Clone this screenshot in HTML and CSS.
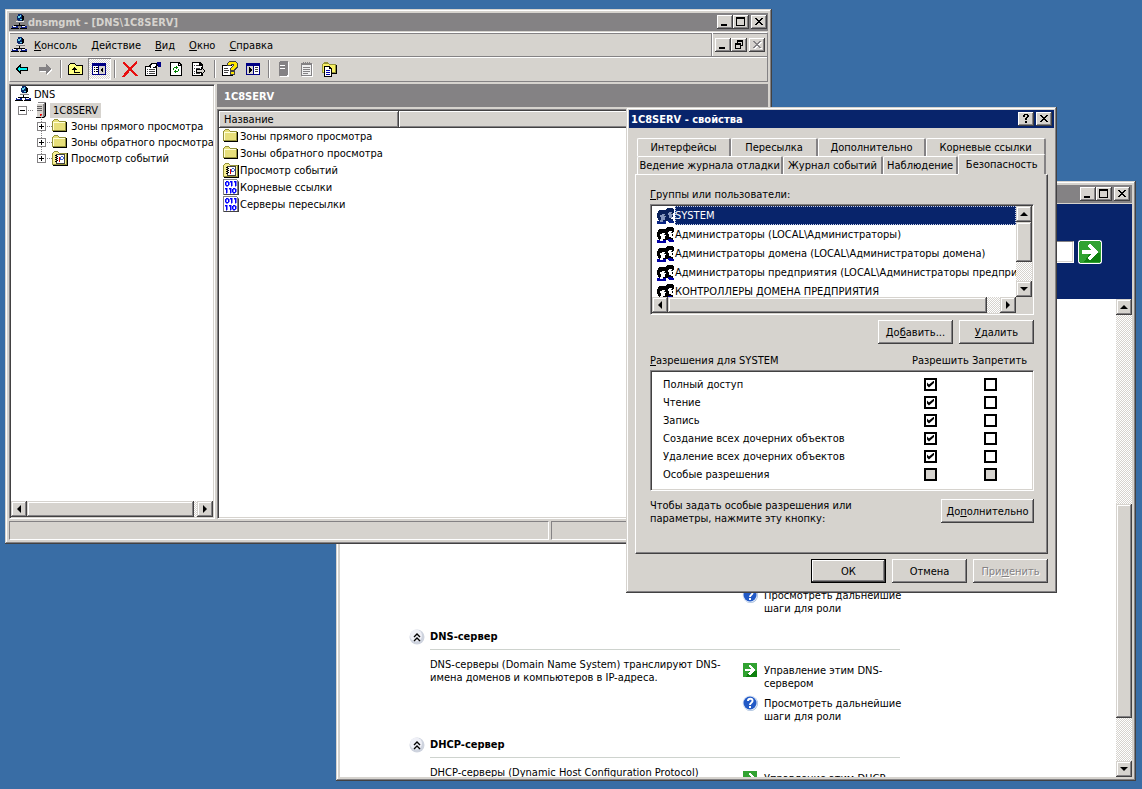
FILE: index.html
```html
<!DOCTYPE html>
<html lang="ru">
<head>
	<meta charset="UTF-8">
	<title>dnsmgmt</title>
	<link rel="stylesheet" href="styles.css">
</head>
<body>
	<svg class="sprite" aria-hidden="true">
		<symbol id="i-dns" viewBox="0 0 16 16">
			<path d="M7 0h4v1h1v1h1v4h-1v1H7V6H6V2h1z" fill="#08286b"/>
			<path d="M7 2h2V1h1v2H9v1H7zM9 5h2v1H9z" fill="#63cfe7"/>
			<path d="M11 1h1v1h1v4h-1v1h-1z" fill="#000"/>
			<path d="M5 7h8v2H5z" fill="#e7e7e7"/>
			<path d="M5 8h9v1H5z" fill="#848284"/>
			<path d="M8 9h1v2h5v2h-1v-1H4v1H3v-2h5z" fill="#000"/>
			<path d="M1 12h6v2H1zM10 12h6v2h-6z" fill="#10208c"/>
			<path d="M2 12h3v1H2zM11 12h3v1h-3z" fill="#fff"/>
			<path d="M0 14h8v1H0zM9 14h7v1H9z" fill="#000"/>
		</symbol>
		<symbol id="i-server" viewBox="0 0 16 16">
			<path d="M3 2l2-2h8v14l-2 2H3z" fill="#848284"/>
			<path d="M3 2h7v13H3z" fill="#d6d3ce"/>
			<path d="M4 1h7v1H4zM3 2h1v13H3z" fill="#fff"/>
			<path d="M4 4h5v1H4zM4 6h5v1H4zM4 8h5v1H4z" fill="#636163"/>
			<path d="M12 1h1v13h-1v1h-1v1H3v-1h8v-1h1z" fill="#000"/>
			<path d="M7 12h2v2H7z" fill="#f00"/>
		</symbol>
		<symbol id="i-folder" viewBox="0 0 16 16">
			<path d="M0 3h1V2h1V1h4v1h1v1h7v10H0z" fill="#94923a"/>
			<path d="M1 4V3h1V2h4v1h1v1h6v8H1z" fill="#e7df7b"/>
			<path d="M1 4h12v1H2v7H1z" fill="#ffffd6"/>
			<path d="M14 4h1v10H1v-1h13z" fill="#000"/>
		</symbol>
		<symbol id="i-events" viewBox="0 0 16 16">
			<path d="M0 3h1V2h1V1h4v1h1v1h8v12H0z" fill="#94923a"/>
			<path d="M1 4V3h1V2h4v1h1v1h7v10H1z" fill="#f7ef94"/>
			<path d="M15 3h1v13H1v-1h14z" fill="#000"/>
			<path d="M4 4h9v10H4z" fill="#424142"/>
			<path d="M5 5h7v8H5z" fill="#fff"/>
			<path d="M3 5h2v1H3zM3 7h2v1H3zM3 9h2v1H3zM3 11h2v1H3zM5 6h1v1H5zM5 8h1v1H5zM5 10h1v1H5z" fill="#000"/>
			<path d="M7 7h1v5H7z" fill="#d00"/>
			<path d="M9 6h2v1H9zM8 7h1v3H8zM11 7h1v2h-1zM9 9h2v1H9z" fill="#4264ce"/>
		</symbol>
		<symbol id="i-binary" viewBox="0 0 16 16">
			<path d="M0 0h14v1h1v1h1v14H0z" fill="#848284"/>
			<path d="M1 1h13v14H1z" fill="#fff"/>
			<path d="M15 3h1v13H1v-1h14z" fill="#424142"/>
			<path d="M3 2h2v1h1v3H5v1H3V6H2V3h1zM3 3v3h2V3zM7 2h2v5H8V3H7zM11 2h2v5h-1V3h-1zM2 9h2v5H3v-4H2zM6 9h2v5H7v-4H6zM10 9h2v1h1v3h-1v1h-2v-1H9v-3h1zM10 10v3h2v-3z" fill="#00f" stroke="#00f" stroke-width=".5" fill-rule="evenodd"/>
		</symbol>
		<symbol id="i-back" viewBox="0 0 16 16">
			<path d="M1 8l5-5h1v3h7v4H7v3H6z" fill="#000"/>
			<path d="M3 8l3-3v2h7v2H6v2z" fill="#00efef"/>
		</symbol>
		<symbol id="i-forward" viewBox="0 0 16 16">
			<path d="M15 9l-5-5v3H3v4h7v3z" fill="#fff"/>
			<path d="M14 8L9 3v3H2v4h7v3z" fill="#848284"/>
		</symbol>
		<symbol id="i-up" viewBox="0 0 16 16">
			<path d="M0 4h1V3h1V2h5v1h1v1h7v10H0z" fill="#000"/>
			<path d="M1 5V4h1V3h5v1h1v1h6v8H1z" fill="#ffff84"/>
			<path d="M6 6h1v1h1v1h1v1H7v2h5v1H6V9H4V8h1V7h1z" fill="#000"/>
		</symbol>
		<symbol id="i-tree" viewBox="0 0 16 16">
			<path d="M1 2h14v12H1z" fill="#000084"/>
			<path d="M2 5h5v8H2z" fill="#fff"/>
			<path d="M8 5h6v8H8z" fill="#d6d3ce"/>
			<path d="M3 6h1v1H3zM5 6h2v1H5zM3 8h1v1H3zM5 8h2v1H5zM3 10h1v1H3zM5 10h2v1H5z" fill="#000"/>
			<path d="M12 6v6L9 9z" fill="#000"/>
		</symbol>
		<symbol id="i-pane" viewBox="0 0 16 16">
			<path d="M1 2h14v12H1z" fill="#000084"/>
			<path d="M2 5h6v8H2z" fill="#d6d3ce"/>
			<path d="M9 5h5v8H9z" fill="#fff"/>
			<path d="M10 6h3v1h-3zM10 8h3v1h-3zM10 10h3v1h-3z" fill="#424142"/>
			<path d="M4 6v6l3-3z" fill="#000"/>
		</symbol>
		<symbol id="i-delete" viewBox="0 0 16 16">
			<path d="M2 1l6 6 6-6v2L9 8l6 6h-2L8 9l-5 6H1l6-7-6-6z" fill="#e71010" stroke="#e71010"/>
		</symbol>
		<symbol id="i-props" viewBox="0 0 16 16">
			<path d="M0 5h12v10H0z" fill="#000"/>
			<path d="M1 6h10v8H1z" fill="#fff"/>
			<path d="M2 8h1v1H2zM4 8h6v1H4zM2 10h1v1H2zM4 10h6v1H4zM2 12h1v1H2zM4 12h6v1H4z" fill="#424142"/>
			<path d="M3 5l3-3h5l2 2-3 3H8L7 6 5 7z" fill="#000"/>
			<path d="M5 5l2-2h4v2L9 6H7z" fill="#fff"/>
			<path d="M12 1h4v5h-3z" fill="#000084"/>
		</symbol>
		<symbol id="i-refresh" viewBox="0 0 16 16">
			<path d="M2 1h9l3 3v11H2z" fill="#000"/>
			<path d="M3 2h7v3h3v9H3z" fill="#fff"/>
			<path d="M11 3v1h1z" fill="#fff"/>
			<path d="M6 6h2V5h1v1h1v1H9v1H8V7H6v2H5V7h1zM10 8h1v2h-1v1H8v1H7v-1H6v-1h1V9h1v1h2z" fill="#008200"/>
		</symbol>
		<symbol id="i-export" viewBox="0 0 16 16">
			<path d="M1 1h8l3 3v11H1z" fill="#000"/>
			<path d="M2 2h6v3h3v9H2z" fill="#fff"/>
			<path d="M3 4h1v1H3zM5 4h3v1H5zM3 7h1v1H3zM5 7h4v1H5zM3 10h1v1H3zM3 12h1v1H3zM5 12h4v1H5z" fill="#424142"/>
			<path d="M5 8h5V6l5 4-5 4v-2H5z" fill="#000"/>
			<path d="M6 9h5V8l3 2-3 2v-1H6z" fill="#d6d3ce"/>
		</symbol>
		<symbol id="i-help" viewBox="0 0 16 16">
			<path d="M0 4h10l1 11H0z" fill="#000"/>
			<path d="M1 5h9v9H1z" fill="#fff"/>
			<path d="M2 7h4v1H2zM2 9h5v1H2zM2 11h4v1H2z" fill="#424142"/>
			<path d="M5 5V2l3-2h5l3 3v3l-3 3v5H8V7l3-2V4h-2v1z" fill="#424142"/>
			<path d="M6 4V2l2-1h5l2 2v3l-3 2v1H9V7l3-2V3H9v1zM9 11h3v2H9z" fill="#ffe700"/>
		</symbol>
		<symbol id="i-srv-off" viewBox="0 0 16 16">
			<path d="M4 1h9v15H4z" fill="#fff"/>
			<path d="M3 1h1V0h8v14h-1v1H3z" fill="#848284"/>
			<path d="M4 4h5v1H4zM4 7h5v1H4z" fill="#fff"/>
		</symbol>
		<symbol id="i-note-off" viewBox="0 0 16 16">
			<path d="M3 3h11v13H3z" fill="#fff"/>
			<path d="M2 2h11v13H2z" fill="#848284"/>
			<path d="M3 4h9v10H3z" fill="#efefef"/>
			<path d="M4 1h1v3H4zM6 1h1v3H6zM8 1h1v3H8zM10 1h1v3h-1zM4 6h7v1H4zM4 8h7v1H4zM4 10h7v1H4zM4 12h5v1H4z" fill="#848284"/>
		</symbol>
		<symbol id="i-folder-doc" viewBox="0 0 16 16">
			<path d="M0 3h1V2h1V1h4v1h1v1h7v9H0z" fill="#94923a"/>
			<path d="M1 3h6v1h6v7H1z" fill="#f7ef63"/>
			<path d="M14 4h1v9H9v-1h5zM2 5h6v1h1v1h1v9H2z" fill="#000"/>
			<path d="M3 6h4v2h2v7H3z" fill="#fff"/>
			<path d="M4 9h4v1H4zM4 11h4v1H4zM4 13h4v1H4z" fill="#0000a5"/>
		</symbol>
		<symbol id="i-users" viewBox="0 0 17 16">
			<path d="M8 3h1V1h1V0h6v1h1v4h-1v4h-2v2h2v2H8z" fill="var(--hair, #000)"/>
			<path d="M12 4h3v2h1v1h-1v3h-3V7h-1V5h1z" fill="var(--skin, #fff)"/>
			<path d="M0 5h1V3h1V2h7v1h1v3h-1v7H2v-1H1v-2H0z" fill="var(--hair, #000)"/>
			<path d="M5 6h3v2h1v1H8v3H6v2H3v-2h1V9H3V7h2z" fill="var(--skin, #fff)"/>
			<path d="M7 7h1v1H7zM14 5h1v1h-1z" fill="#31414a"/>
			<path d="M0 13h3v1h3v-1h3v3H0zM11 12h4v1h2v2h-5v-1h-1z" fill="var(--shirt, #0000a5)"/>
		</symbol>
		<symbol id="i-go" viewBox="0 0 24 24">
			<path d="M2 1h20v1h1v20h-1v1H2v-1H1V2h1z" fill="#31a231"/>
			<path d="M12 13h10v9H6z" fill="#108210"/>
			<path d="M4 10h9L9 6l3-2 8 8-8 8-3-2 4-4H4z" fill="#fff"/>
		</symbol>
		<symbol id="i-ask" viewBox="0 0 16 16">
			<circle cx="8.500" cy="8.500" r="7.500" fill="#9cb6d6"/>
			<circle cx="8" cy="8" r="7.500" fill="#dee7f7"/>
			<circle cx="8" cy="8" r="6.500" fill="#2159c6"/>
			<path d="M6 6c0-3 5-3 4.500 0C10.500 8 8 7.500 8 10M8 11v2" fill="none" stroke="#fff" stroke-width="2"/>
		</symbol>
		<symbol id="i-chevrons" viewBox="0 0 16 16">
			<circle cx="8" cy="8" r="7.500" fill="#ced3de"/>
			<circle cx="7" cy="6.500" r="6" fill="#eff0f7"/>
			<path d="M5 8l3-3 3 3M5 12l3-3 3 3" fill="none" stroke="#000" stroke-width="1.400"/>
		</symbol>
		<symbol id="i-min" viewBox="0 0 12 10"><path d="M2 7h6v2H2z"/></symbol>
		<symbol id="i-max" viewBox="0 0 12 10"><path d="M1 0h9v9H1zM2 2v6h7V2z" fill-rule="evenodd"/></symbol>
		<symbol id="i-restore" viewBox="0 0 12 10"><path d="M4 0h6v6H8v3H2V3h2zM5 2v1h3v2h1V2zM3 5v3h4V5z" fill-rule="evenodd"/></symbol>
		<symbol id="i-close" viewBox="0 0 12 10"><path d="M2 1h2v1h1v1h2V2h1V1h2v1H9v1H8v1H7v1h1v1h1v1h1v1H8V7H7V6H5v1H4v1H2V7h1V6h1V5h1V4H4V3H3V2H2z"/></symbol>
		<symbol id="i-what" viewBox="0 0 12 10"><path d="M3 3V1h1V0h4v1h1v2H8v1H7v2H5V4h1V3h1V1H5v2zM5 7h2v2H5z"/></symbol>
	</svg>

	<!-- manage server -->
	<section class="window manage">
		<header class="titlebar">
			<span class="title"></span>
			<button class="cap" aria-label="Свернуть"><svg><use href="#i-min"/></svg></button>
			<button class="cap" aria-label="Развернуть"><svg><use href="#i-max"/></svg></button>
			<button class="cap close" aria-label="Закрыть"><svg><use href="#i-close"/></svg></button>
		</header>
		<div class="banner">
			<input type="text" class="search" aria-label="Поиск">
			<button class="go" aria-label="Найти"><svg><use href="#i-go"/></svg></button>
		</div>
		<div class="scroller">
			<div class="roles">
				<div class="role first">
					<ul class="links">
						<li><a href="#"><svg class="icon smooth"><use href="#i-ask"/></svg><span>Просмотреть дальнейшие<br>шаги для роли</span></a></li>
					</ul>
				</div>
				<div class="role">
					<svg class="icon smooth"><use href="#i-chevrons"/></svg>
					<h2>DNS-сервер</h2>
					<div class="role-body">
						<p>DNS-серверы (Domain Name System) транслируют DNS-<br>имена доменов и компьютеров в IP-адреса.</p>
						<ul class="links">
							<li><a href="#"><svg class="icon"><use href="#i-go"/></svg><span>Управление этим DNS-<br>сервером</span></a></li>
							<li><a href="#"><svg class="icon smooth"><use href="#i-ask"/></svg><span>Просмотреть дальнейшие<br>шаги для роли</span></a></li>
						</ul>
					</div>
				</div>
				<div class="role">
					<svg class="icon smooth"><use href="#i-chevrons"/></svg>
					<h2>DHCP-сервер</h2>
					<div class="role-body">
						<p>DHCP-серверы (Dynamic Host Configuration Protocol)</p>
						<ul class="links">
							<li><a href="#"><svg class="icon"><use href="#i-go"/></svg><span>Управление этим DHCP-</span></a></li>
						</ul>
					</div>
				</div>
			</div>
			<div class="scrollbar vertical page-scroll">
				<button class="up" aria-label="Вверх"></button>
				<div class="track"><div class="thumb"></div></div>
				<button class="down" aria-label="Вниз"></button>
			</div>
		</div>
	</section>

	<!-- dns console -->
	<section class="window console">
		<header class="titlebar">
			<svg class="icon"><use href="#i-dns"/></svg>
			<h1 class="title">dnsmgmt - [DNS\1C8SERV]</h1>
			<button class="cap" aria-label="Свернуть"><svg><use href="#i-min"/></svg></button>
			<button class="cap" aria-label="Развернуть"><svg><use href="#i-max"/></svg></button>
			<button class="cap close" aria-label="Закрыть"><svg><use href="#i-close"/></svg></button>
		</header>
		<div class="bars">
			<nav class="menubar">
				<svg class="icon"><use href="#i-dns"/></svg>
				<button><u>К</u>онсоль</button>
				<button><u>Д</u>ействие</button>
				<button><u>В</u>ид</button>
				<button><u>О</u>кно</button>
				<button><u>С</u>правка</button>
				<div class="mdi">
					<button class="cap" aria-label="Свернуть окно"><svg><use href="#i-min"/></svg></button>
					<button class="cap" aria-label="Восстановить окно"><svg><use href="#i-restore"/></svg></button>
					<button class="cap close" disabled aria-label="Закрыть окно"><svg><use href="#i-close"/></svg></button>
				</div>
			</nav>
			<div class="toolbar">
				<button aria-label="Назад"><svg class="icon"><use href="#i-back"/></svg></button>
				<button aria-label="Вперед" disabled><svg class="icon"><use href="#i-forward"/></svg></button>
				<i class="sep"></i>
				<button aria-label="На уровень выше"><svg class="icon"><use href="#i-up"/></svg></button>
				<button class="pressed" aria-label="Дерево консоли"><svg class="icon"><use href="#i-tree"/></svg></button>
				<i class="sep"></i>
				<button aria-label="Удалить"><svg class="icon"><use href="#i-delete"/></svg></button>
				<button aria-label="Свойства"><svg class="icon"><use href="#i-props"/></svg></button>
				<button aria-label="Обновить"><svg class="icon"><use href="#i-refresh"/></svg></button>
				<button aria-label="Экспорт"><svg class="icon"><use href="#i-export"/></svg></button>
				<i class="sep"></i>
				<button aria-label="Справка"><svg class="icon"><use href="#i-help"/></svg></button>
				<button aria-label="Область действий"><svg class="icon"><use href="#i-pane"/></svg></button>
				<i class="sep"></i>
				<button aria-label="Сервер" disabled><svg class="icon"><use href="#i-srv-off"/></svg></button>
				<button aria-label="Запись" disabled><svg class="icon"><use href="#i-note-off"/></svg></button>
				<button aria-label="Новая зона"><svg class="icon"><use href="#i-folder-doc"/></svg></button>
			</div>
		</div>
		<div class="panes">
			<div class="tree-pane sunken">
				<ul class="tree">
					<li class="lvl0"><svg class="icon"><use href="#i-dns"/></svg><span>DNS</span></li>
					<li class="lvl1"><button class="toggle minus" aria-label="Свернуть"></button><svg class="icon"><use href="#i-server"/></svg><span class="current">1C8SERV</span></li>
					<li class="lvl2"><button class="toggle" aria-label="Развернуть"></button><svg class="icon"><use href="#i-folder"/></svg><span>Зоны прямого просмотра</span></li>
					<li class="lvl2"><button class="toggle" aria-label="Развернуть"></button><svg class="icon"><use href="#i-folder"/></svg><span>Зоны обратного просмотра</span></li>
					<li class="lvl2"><button class="toggle" aria-label="Развернуть"></button><svg class="icon"><use href="#i-events"/></svg><span>Просмотр событий</span></li>
				</ul>
				<div class="scrollbar horizontal tree-scroll">
					<button class="left" aria-label="Влево"></button>
					<div class="track"><div class="thumb"></div></div>
					<button class="right" aria-label="Вправо"></button>
				</div>
			</div>
			<div class="detail">
				<h2 class="detail-head">1C8SERV</h2>
				<div class="detail-list sunken">
					<table>
						<thead>
							<tr><th class="col-name">Название</th><th></th></tr>
						</thead>
						<tbody>
							<tr><td colspan="2"><svg class="icon"><use href="#i-folder"/></svg>Зоны прямого просмотра</td></tr>
							<tr><td colspan="2"><svg class="icon"><use href="#i-folder"/></svg>Зоны обратного просмотра</td></tr>
							<tr><td colspan="2"><svg class="icon"><use href="#i-events"/></svg>Просмотр событий</td></tr>
							<tr><td colspan="2"><svg class="icon"><use href="#i-binary"/></svg>Корневые ссылки</td></tr>
							<tr><td colspan="2"><svg class="icon"><use href="#i-binary"/></svg>Серверы пересылки</td></tr>
						</tbody>
					</table>
				</div>
			</div>
		</div>
		<footer class="status"><div class="main"></div><div></div></footer>
	</section>

	<!-- server properties -->
	<section class="window dialog">
		<header class="titlebar active">
			<h1 class="title">1C8SERV - свойства</h1>
			<button class="cap" aria-label="Справка"><svg><use href="#i-what"/></svg></button>
			<button class="cap close" aria-label="Закрыть"><svg><use href="#i-close"/></svg></button>
		</header>
		<div class="dialog-body">
			<div class="tabs back">
				<button class="t1">Интерфейсы</button>
				<button class="t2">Пересылка</button>
				<button class="t3">Дополнительно</button>
				<button class="t4">Корневые ссылки</button>
			</div>
			<div class="tabs front">
				<button class="t5">Ведение журнала отладки</button>
				<button class="t6">Журнал событий</button>
				<button class="t7">Наблюдение</button>
				<button class="t8 selected">Безопасность</button>
			</div>
			<div class="page">
				<div class="caption" id="groups"><u>Г</u>руппы или пользователи:</div>
				<div class="groups sunken">
					<ul role="listbox" aria-labelledby="groups">
						<li class="selected"><svg class="icon"><use href="#i-users"/></svg><span>SYSTEM</span></li>
						<li><svg class="icon"><use href="#i-users"/></svg><span>Администраторы (LOCAL\Администраторы)</span></li>
						<li><svg class="icon"><use href="#i-users"/></svg><span>Администраторы домена (LOCAL\Администраторы домена)</span></li>
						<li><svg class="icon"><use href="#i-users"/></svg><span>Администраторы предприятия (LOCAL\Администраторы предприятия)</span></li>
						<li><svg class="icon"><use href="#i-users"/></svg><span>КОНТРОЛЛЕРЫ ДОМЕНА ПРЕДПРИЯТИЯ</span></li>
					</ul>
					<div class="scrollbar vertical">
						<button class="up" aria-label="Вверх"></button>
						<div class="track"><div class="thumb"></div></div>
						<button class="down" aria-label="Вниз"></button>
					</div>
					<div class="scrollbar horizontal">
						<button class="left" aria-label="Влево"></button>
						<div class="track"><div class="thumb"></div></div>
						<button class="right" aria-label="Вправо"></button>
					</div>
				</div>
				<div class="actions">
					<button class="btn">До<u>б</u>авить...</button>
					<button class="btn"><u>У</u>далить</button>
				</div>
				<div class="caption perm-head">
					<span id="perms"><u>Р</u>азрешения для SYSTEM</span>
					<span class="allow">Разрешить</span>
					<span class="deny">Запретить</span>
				</div>
				<div class="perms sunken">
					<table aria-labelledby="perms">
						<tr><td>Полный доступ</td><td><input type="checkbox" checked aria-label="Полный доступ: разрешить"></td><td><input type="checkbox" aria-label="Полный доступ: запретить"></td></tr>
						<tr><td>Чтение</td><td><input type="checkbox" checked aria-label="Чтение: разрешить"></td><td><input type="checkbox" aria-label="Чтение: запретить"></td></tr>
						<tr><td>Запись</td><td><input type="checkbox" checked aria-label="Запись: разрешить"></td><td><input type="checkbox" aria-label="Запись: запретить"></td></tr>
						<tr><td>Создание всех дочерних объектов</td><td><input type="checkbox" checked aria-label="Создание: разрешить"></td><td><input type="checkbox" aria-label="Создание: запретить"></td></tr>
						<tr><td>Удаление всех дочерних объектов</td><td><input type="checkbox" checked aria-label="Удаление: разрешить"></td><td><input type="checkbox" aria-label="Удаление: запретить"></td></tr>
						<tr><td>Особые разрешения</td><td><input type="checkbox" disabled aria-label="Особые: разрешить"></td><td><input type="checkbox" disabled aria-label="Особые: запретить"></td></tr>
					</table>
				</div>
				<div class="more">
					<p>Чтобы задать особые разрешения или<br>параметры, нажмите эту кнопку:</p>
					<button class="btn wide">До<u>п</u>олнительно</button>
				</div>
			</div>
			<div class="buttons">
				<button class="btn default">ОК</button>
				<button class="btn">Отмена</button>
				<button class="btn" disabled>При<u>м</u>енить</button>
			</div>
		</div>
	</section>
</body>
</html>
```
FILE: styles.css
```css
* {
	box-sizing: border-box;
	margin: 0;
	padding: 0;
}
:root {
	--face: #d6d3ce;
	--shade: #848284;
	--dark: #424142;
	--navy: #08246b;
	--raised: inset -1px -1px var(--dark), inset 1px 1px #fff, inset -2px -2px var(--shade);
}
body {
	height: 100vh;
	position: relative;
	overflow: hidden;
	background: #396da5;
	color: #000;
	font: 11px/13px "DejaVu Sans Condensed", Tahoma, sans-serif;
}
button, input {
	font: inherit;
	color: inherit;
	border: 0;
	border-radius: 0;
	background: none;
}
ul {
	list-style: none;
}
a {
	color: inherit;
	text-decoration: none;
}
h1, h2 {
	font-size: 11px;
	font-weight: bold;
}
svg {
	display: block;
	shape-rendering: crispEdges;
}
.smooth {
	shape-rendering: auto;
}
.sprite {
	position: absolute;
	width: 0;
	height: 0;
}
.icon {
	width: 16px;
	height: 16px;
	flex: none;
}
.sunken {
	border: 1px solid;
	border-color: var(--shade) #fff #fff var(--shade);
	background: #fff;
	position: relative;
	padding: 1px;
	box-shadow: inset 1px 1px var(--dark), inset -1px -1px var(--face);
}

/* windows */
.window {
	position: absolute;
	display: flex;
	flex-direction: column;
	padding: 4px;
	background: var(--face);
	box-shadow: inset -1px -1px var(--dark), inset 1px 1px var(--face), inset -2px -2px var(--shade), inset 2px 2px #fff;
}
.manage {
	left: 336px;
	top: 181px;
	width: 800px;
	height: 600px;
}
.console {
	left: 5px;
	top: 9px;
	width: 767px;
	height: 535px;
}
.dialog {
	left: 626px;
	top: 107px;
	width: 431px;
	padding: 3px;
}
.titlebar {
	display: flex;
	align-items: center;
	flex: none;
	height: 18px;
	padding: 0 2px;
	background: var(--shade);
	color: var(--face);
}
.console .titlebar {
	padding-right: 1px;
}
.titlebar.active {
	background: var(--navy);
	color: #fff;
}
.title {
	flex: 1;
	white-space: nowrap;
}
.titlebar .icon {
	margin-right: 1px;
}
.cap {
	width: 16px;
	height: 14px;
	padding: 2px;
	background: var(--face);
	box-shadow: var(--raised);
	color: #000;
}
.cap svg {
	width: 12px;
	height: 10px;
}
.cap.close {
	margin-left: 2px;
}
.cap:disabled svg {
	fill: var(--shade);
	filter: drop-shadow(1px 1px #fff);
}

/* scrollbars */
.scrollbar {
	display: flex;
	background: conic-gradient(#fff 25%, var(--face) 0 50%, #fff 0 75%, var(--face) 0) 0 0/2px 2px;
}
.scrollbar.vertical {
	width: 16px;
	flex-direction: column;
}
.scrollbar.horizontal {
	height: 16px;
}
.scrollbar button {
	display: flex;
	align-items: center;
	justify-content: center;
	width: 16px;
	height: 16px;
	flex: none;
}
.scrollbar button, .thumb {
	background: var(--face);
	box-shadow: inset -1px -1px var(--dark), inset 1px 1px var(--face), inset -2px -2px var(--shade), inset 2px 2px #fff;
}
.scrollbar button::before {
	content: "";
	border: 4px solid transparent;
}
.scrollbar .up::before {
	border-top: 0;
	border-bottom-color: #000;
}
.scrollbar .down::before {
	border-bottom: 0;
	border-top-color: #000;
}
.scrollbar .left::before {
	border-left: 0;
	border-right-color: #000;
}
.scrollbar .right::before {
	border-right: 0;
	border-left-color: #000;
}
.track {
	flex: 1;
	display: flex;
	flex-direction: inherit;
}
.horizontal .thumb {
	width: 96%;
}
.vertical .thumb {
	height: 68%;
}
.tree-scroll .thumb {
	width: 98%;
}
.page-scroll .track {
	justify-content: flex-end;
	padding-bottom: 43px;
}
.page-scroll .thumb {
	height: 53%;
}

/* manage server */
.banner {
	display: flex;
	align-items: center;
	justify-content: flex-end;
	gap: 4px;
	flex: none;
	height: 95px;
	margin-top: 1px;
	padding-right: 30px;
	background: var(--navy);
}
.search {
	width: 180px;
	height: 22px;
	padding: 0 4px;
	background: #fff;
	border: 1px solid;
	border-color: var(--shade) #fff #fff var(--shade);
	box-shadow: inset -1px -1px var(--face);
}
.go, .go svg {
	width: 24px;
	height: 24px;
}
.go {
	border-radius: 3px;
	background: #fff;
}
.scroller {
	display: flex;
	flex: 1;
	min-height: 0;
	background: #fff;
}
.roles {
	flex: 1;
	overflow: hidden;
	padding-left: 69px;
}
.role {
	display: grid;
	grid-template-columns: 16px 470px;
	column-gap: 5px;
	padding-bottom: 14px;
}
.role.first {
	height: 330px;
	align-content: end;
}
.role.first .links {
	grid-column: 2;
	justify-self: end;
}
.role h2 {
	line-height: 16px;
	padding-bottom: 4px;
	border-bottom: 1px solid #ced3ce;
}
.role-body {
	grid-column: 2;
	display: flex;
	justify-content: space-between;
	padding-top: 8px;
	white-space: nowrap;
}
.links {
	width: 158px;
	padding-top: 4px;
}
.links li + li {
	margin-top: 5px;
}
.links a {
	display: flex;
	gap: 6px;
	white-space: nowrap;
}
.links span {
	padding-top: 2px;
}

/* dns console */
.bars {
	flex: none;
	margin-top: 1px;
	border: 1px solid;
	border-color: #fff var(--shade) var(--shade) #fff;
}
.menubar {
	display: flex;
	align-items: center;
	height: 24px;
	padding-left: 1px;
	border-bottom: 1px solid var(--shade);
	box-shadow: inset 0 1px var(--shade);
}
.menubar > button {
	padding: 2px 7px 0;
	height: 20px;
}
.mdi {
	display: flex;
	align-items: center;
	align-self: stretch;
	margin-left: auto;
	padding: 0 2px 0 3px;
	border-left: 1px solid var(--shade);
	box-shadow: inset 1px 0 #fff;
}
.toolbar {
	display: flex;
	align-items: center;
	height: 24px;
	padding: 0 0 1px 1px;
	border-top: 1px solid #fff;
}
.toolbar button {
	width: 23px;
	height: 22px;
	padding: 3px;
}
.toolbar .pressed {
	background: conic-gradient(#fff 25%, var(--face) 0 50%, #fff 0 75%, var(--face) 0) 0 0/2px 2px;
	box-shadow: inset 1px 1px var(--shade), inset -1px -1px #fff;
}
.sep {
	width: 2px;
	height: 18px;
	margin: 0 3px;
	border-left: 1px solid var(--shade);
	border-right: 1px solid #fff;
}
.panes {
	display: flex;
	flex: 1;
	min-height: 0;
	gap: 2px;
	padding-top: 2px;
}
.tree-pane {
	display: flex;
	flex-direction: column;
	width: 206px;
}
.tree {
	flex: 1;
	overflow: hidden;
}
.tree li {
	display: flex;
	align-items: center;
	height: 16px;
	white-space: nowrap;
}
.tree span {
	padding: 1px 3px;
}
.tree .current {
	margin-left: 1px;
	background: var(--face);
}
.lvl0 {
	padding-left: 4px;
}
.lvl1 {
	padding-left: 7px;
}
.lvl2 {
	padding-left: 26px;
}
.toggle {
	flex: none;
	position: relative;
	width: 9px;
	height: 9px;
	margin-right: 6px;
	border: 1px solid var(--shade);
	background: linear-gradient(#000, #000) center/5px 1px no-repeat, linear-gradient(#000, #000) center/1px 5px no-repeat;
}
.toggle.minus {
	background: linear-gradient(#000, #000) center/5px 1px no-repeat;
}
/* dotted connectors of the tree */
.toggle::after {
	content: "";
	position: absolute;
	left: 9px;
	top: 3px;
	width: 5px;
	border-top: 1px dotted var(--shade);
}
.lvl2 .toggle::before {
	content: "";
	position: absolute;
	left: 3px;
	bottom: 8px;
	height: 7px;
	border-left: 1px dotted var(--shade);
}
.detail {
	flex: 1;
	display: flex;
	flex-direction: column;
	min-width: 0;
}
.detail-head {
	height: 23px;
	margin-bottom: 2px;
	padding: 6px 7px 4px;
	background: var(--shade);
	color: #fff;
}
.detail-list {
	flex: 1;
}
.detail-list table {
	width: 100%;
	border-collapse: collapse;
}
.detail-list th {
	height: 17px;
	padding: 0 5px;
	text-align: left;
	font-weight: normal;
	background: var(--face);
	box-shadow: var(--raised);
}
.col-name {
	width: 180px;
}
.detail-list td {
	height: 17px;
	padding: 1px 0 0 4px;
}
.detail-list td .icon {
	float: left;
	margin: -2px 1px 0 0;
}
.status {
	display: flex;
	gap: 2px;
	flex: none;
	height: 19px;
	margin-top: 2px;
}
.status div {
	flex: 1;
	border: 1px solid;
	border-color: var(--shade) #fff #fff var(--shade);
}
.status .main {
	flex: none;
	width: 540px;
}

/* properties dialog */
.dialog-body {
	padding: 8px 6px 7px;
}
.tabs {
	display: flex;
	height: 18px;
	padding: 0 2px;
}
.tabs button {
	border-top: 1px solid #fff;
	border-left: 1px solid #fff;
	border-right: 2px solid var(--shade);
	border-radius: 2px 2px 0 0;
	white-space: nowrap;
}
.tabs.back {
	margin-top: 2px;
}
.t1 { width: 94px; }
.t2 { width: 87px; }
.t3 { width: 108px; }
.t4 { width: 120px; }
.t5 { width: 147px; }
.t6 { width: 100px; }
.t7 { width: 76px; }
.t8 { width: 88px; }
.tabs .selected {
	position: relative;
	height: 20px;
	margin-top: -2px;
	background: var(--face);
	box-shadow: 0 1px var(--face);
}
.page {
	padding: 13px 13px 28px 14px;
	border: 1px solid;
	border-color: #fff var(--dark) var(--dark) #fff;
	box-shadow: inset -1px -1px var(--shade);
}
.caption {
	margin-bottom: 3px;
}
.groups {
	display: grid;
	grid-template-columns: minmax(0, 1fr) 16px;
	grid-template-rows: 91px 16px;
	height: 111px;
	background: var(--face);
}
.groups ul {
	overflow: hidden;
	background: #fff;
}
.groups li {
	display: flex;
	align-items: center;
	height: 19px;
	padding-left: 5px;
	white-space: nowrap;
}
.groups li .icon {
	width: 17px;
	margin-right: 1px;
}
.groups li span {
	flex: 1;
	padding: 3px 0;
}
.groups .selected {
	--hair: #08205a;
	--skin: #8496bd;
	--shirt: #082484;
}
.groups .selected span {
	background: var(--navy);
	color: #fff;
	outline: 1px dotted #c6cfe7;
	outline-offset: -1px;
}
.actions {
	display: flex;
	justify-content: flex-end;
	gap: 6px;
	margin: 5px 0 10px;
}
.btn {
	width: 75px;
	height: 24px;
	background: var(--face);
	box-shadow: var(--raised);
}
.btn.wide {
	width: 93px;
}
.btn.default {
	border: 1px solid #000;
}
.btn:disabled {
	color: var(--shade);
	text-shadow: 1px 1px #fff;
}
.perm-head {
	display: grid;
	grid-template-columns: 1fr 60px 62px;
	white-space: nowrap;
}
.perms {
	height: 121px;
	padding: 4px 0;
}
.perms table {
	width: 100%;
	border-collapse: collapse;
}
.perms td {
	height: 18px;
}
.perms td:first-child {
	padding-left: 12px;
}
.perms td + td {
	width: 60px;
}
.perms td:last-child {
	width: 49px;
}
.perms input {
	display: block;
	appearance: none;
	width: 13px;
	height: 13px;
	border: 2px solid #000;
	background: #fff;
}
.perms input:checked::before {
	content: "";
	display: block;
	width: 7px;
	height: 7px;
	margin: 1px;
	background: #000;
	clip-path: polygon(0 28%, 28% 57%, 100% 0, 100% 36%, 28% 100%, 0 71%);
}
.perms input:disabled {
	background: var(--face);
}
.more {
	display: flex;
	justify-content: space-between;
	align-items: flex-start;
	margin-top: 8px;
}
.buttons {
	display: flex;
	justify-content: flex-end;
	gap: 6px;
	padding-top: 5px;
}
```
